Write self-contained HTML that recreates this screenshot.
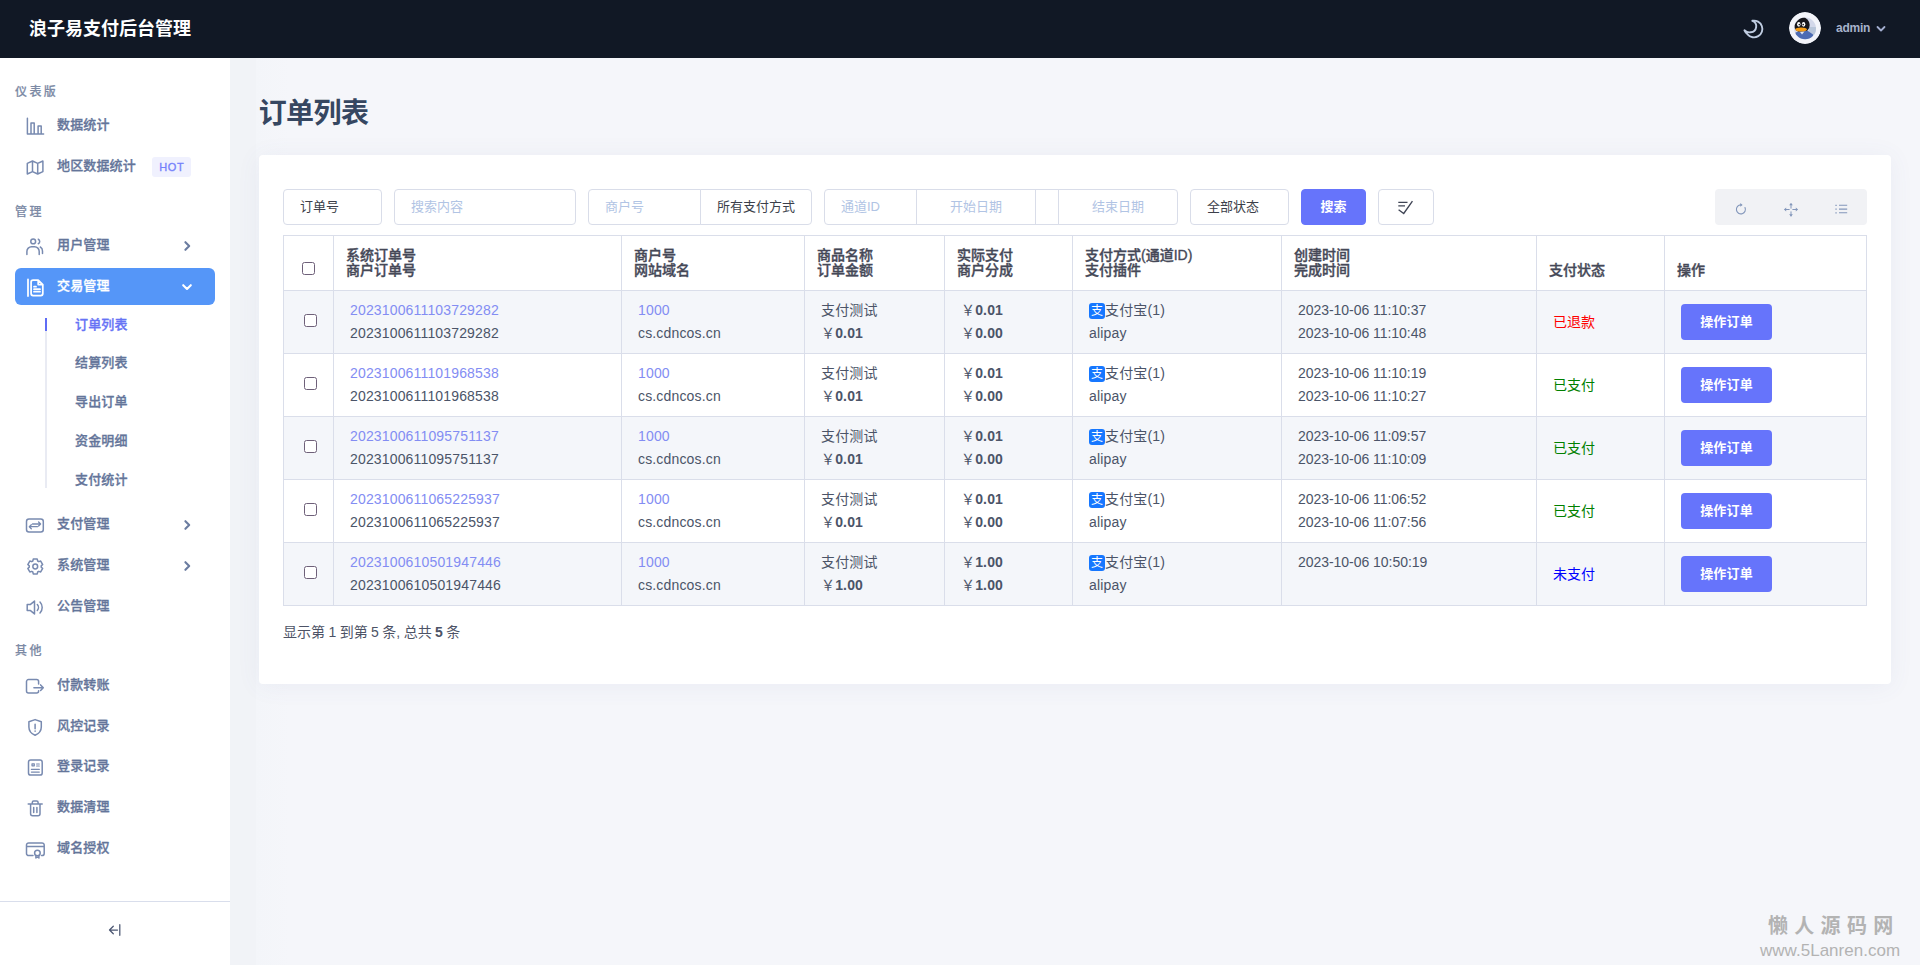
<!DOCTYPE html>
<html lang="zh-CN">
<head>
<meta charset="utf-8">
<title>订单列表</title>
<style>
*{box-sizing:border-box;margin:0;padding:0}
html,body{width:1920px;height:965px;overflow:hidden}
body{font-family:"Liberation Sans","Noto Sans CJK SC",sans-serif;background:#f5f6fa;color:#4b5468;font-size:14px;position:relative}
.abs{position:absolute}
/* header */
#hdr{position:absolute;left:0;top:0;width:1920px;height:58px;background:#111825;z-index:5}
#brand{position:absolute;left:29px;top:16px;font-size:18px;line-height:26px;font-weight:700;color:#fff;letter-spacing:0}
#uname{position:absolute;left:1836px;top:19px;font-size:12px;line-height:18px;font-weight:700;color:#a7b2cb;letter-spacing:-.25px}
#avatar{position:absolute;left:1789px;top:12px;width:32px;height:32px;border-radius:50%;overflow:hidden}
/* sidebar */
#side{position:absolute;left:0;top:58px;width:230px;height:907px;background:#fff;z-index:4}
.sec{position:absolute;left:15px;font-size:12px;line-height:16px;font-weight:500;-webkit-text-stroke:.2px;color:#7c8aa5;letter-spacing:2.4px;margin-top:1.5px}
.it{position:absolute;left:15px;width:200px;height:37px;border-radius:6px;color:#64759a;font-size:13px;font-weight:500;line-height:36px;letter-spacing:.15px;-webkit-text-stroke:.3px}
.it .tx{position:absolute;left:42px;top:0;white-space:nowrap}
.it svg.ic{position:absolute;left:10px;top:9px;width:20px;height:20px;fill:none;stroke:#788ab0;stroke-width:1.500;stroke-linecap:round;stroke-linejoin:round}
.it svg.ar{position:absolute;left:166px;top:13px;width:12px;height:12px;fill:none;stroke:#6b7ca0;stroke-width:2.1;stroke-linecap:round;stroke-linejoin:round}
.it.act{background:#5596f8;color:#fff}
.it.act svg.ic{stroke:#fff;stroke-width:1.750}
.it.act svg.ar{stroke:#fff}
.sub{position:absolute;left:75px;font-size:13px;line-height:20px;font-weight:500;color:#64759a;white-space:nowrap;letter-spacing:.15px;margin-top:.5px;-webkit-text-stroke:.3px}
.sub.on{color:#6673f5}
.hot{position:absolute;left:137px;top:9px;width:39px;height:20px;border-radius:3px;background:#f0f1fe;color:#7480fb;font-size:11px;line-height:20px;text-align:center;font-weight:400;letter-spacing:.6px;padding-left:.5px}
/* main */
#ttl{position:absolute;left:258.700px;top:94.600px;font-size:28px;line-height:38px;font-weight:700;color:#364761;letter-spacing:-.6px}
#card{position:absolute;left:259px;top:155px;width:1632px;height:529px;background:#fff;border-radius:4px;box-shadow:0 2px 24px rgba(90,100,150,.07)}
.fc{position:absolute;top:189px;height:36px;border:1px solid #d9dde9;border-radius:4px;background:#fff;font-size:13px;line-height:33px;color:#3c3f4a;padding-left:16px;white-space:nowrap}
.fc.ph{color:#b1c4e4}
.fc.ctr{padding-left:0;text-align:center}
/* table */
#tb{position:absolute;left:283px;top:235px;width:1583px;border-collapse:collapse;table-layout:fixed}
#tb th,#tb td{border:1px solid #dadeea}
#tb th{height:55px;vertical-align:bottom;text-align:left;padding:0 0 12px 12px;font-size:14px;line-height:15px;font-weight:500;-webkit-text-stroke:.35px;color:#454857;background:#fff}
#tb td{height:63px;vertical-align:top;padding:8px 0 0 16px;font-size:14px;line-height:23px;color:#4b5468;white-space:nowrap;letter-spacing:.16px}
#tb tr.o td{background:#f4f6fa}
#tb a{color:#838df3;text-decoration:none}
#tb td.cb{padding:0 0 5px 4px;text-align:center;vertical-align:middle}#tb th.cb{padding:9px 0 0 0;text-align:center;vertical-align:middle}
.ck{display:inline-block;width:13px;height:13px;border:1.5px solid #6e6079;border-radius:2.5px;background:#fff;vertical-align:middle}
#tb td.st{vertical-align:middle;padding-top:0;font-size:14px;letter-spacing:0;font-weight:400}#tb td.dt{letter-spacing:-.04px}
#tb td.op{vertical-align:middle;padding-top:0}
.btn{display:inline-block;width:91px;height:36px;border-radius:4px;background:#6674fb;color:#fff;font-size:13px;font-weight:700;line-height:35px;text-align:center;vertical-align:middle}
b{font-weight:700}
.ali{display:inline-block;width:16px;height:16px;border-radius:3px;background:#1677ff;vertical-align:-3px;position:relative;top:1px;overflow:hidden;color:#fff;font-size:12px;line-height:16px;text-align:center;font-weight:400}
</style>
</head>
<body>
<!-- HEADER -->
<div id="hdr">
  <div id="brand">浪子易支付后台管理</div>
  <svg class="abs" style="left:1740px;top:16px" width="28" height="28" viewBox="0 0 28 28"><path d="M12.300 4.800A8.350 8.350 0 1 1 7.570 18.300Q5.500 16.600 4.450 14.300Q7.500 17 10.750 16.240A5.900 5.900 0 0 0 12.300 4.800Z" fill="none" stroke="#c0cde2" stroke-width="1.900" stroke-linejoin="round"/></svg>
  <div id="avatar">
    <svg width="32" height="32" viewBox="0 0 32 32"><defs><clipPath id="avc"><circle cx="16.100" cy="16.400" r="10.900"/></clipPath></defs><circle cx="16" cy="16" r="16" fill="#f3f4fa"/><g clip-path="url(#avc)"><rect x="4" y="4" width="25" height="25" fill="#d3d8ea"/><rect x="20" y="15" width="9" height="9" fill="#b9c6da"/><ellipse cx="12.900" cy="13" rx="7.800" ry="7.900" fill="#17171d"/><ellipse cx="9.800" cy="12.300" rx="1.700" ry="2.400" fill="#fff"/><ellipse cx="14.600" cy="12.300" rx="1.700" ry="2.400" fill="#fff"/><circle cx="10.300" cy="12.600" r=".8" fill="#17171d"/><circle cx="14.200" cy="12.600" r=".8" fill="#17171d"/><path d="M6.500 20.500q6-2.500 12.500-1.500l5 3.500v6h-18z" fill="#4d6bb3"/><path d="M11 20l2 2.500 2.500-3z" fill="#dfe6f5"/><ellipse cx="12.100" cy="17.500" rx="5.900" ry="2.100" fill="#f59b14"/></g></svg>
  </div>
  <div id="uname">admin</div>
  <svg class="abs" style="left:1876px;top:25px" width="10" height="8" viewBox="0 0 10 8"><path d="M1.5 2l3.5 3.5L8.500 2" fill="none" stroke="#a3aed0" stroke-width="1.8" stroke-linecap="round" stroke-linejoin="round"/></svg>
</div>

<!-- SIDEBAR -->
<div id="side">
  <div class="sec" style="top:24px">仪表版</div>
  <div class="it" style="top:49px"><svg class="ic" viewBox="0 0 20 20"><path d="M2.400 2.300V18H18.600M6 18V7.100H9.200V18M13.100 18V10H16.200V18"/></svg><span class="tx">数据统计</span></div>
  <div class="it" style="top:90px"><svg class="ic" viewBox="0 0 20 20"><path d="M2.300 6.400L7.500 4L12.700 6.400L17.900 4V14.600L12.700 17L7.500 14.600L2.300 17ZM7.500 4V14.600M12.700 6.400V17"/></svg><span class="tx">地区数据统计</span><span class="hot">HOT</span></div>
  <div class="sec" style="top:144px">管理</div>
  <div class="it" style="top:169px"><svg class="ic" viewBox="0 0 20 20"><circle cx="8.200" cy="5.400" r="2.400"/><path d="M1.900 18.400v-3a4.600 4.600 0 0 1 4.600-4.600h3.100a4.600 4.600 0 0 1 4.600 4.600v3M13.300 3.200a2.500 2.500 0 0 1 0 4.500M15.300 11a4.400 4.400 0 0 1 2.200 3.900v2.700"/></svg><span class="tx">用户管理</span><svg class="ar" viewBox="0 0 12 12"><path d="M4.400 2.200l3.800 3.800-3.800 3.800"/></svg></div>
  <div class="it act" style="top:210px"><svg class="ic" viewBox="0 0 20 20"><path d="M3 2.400V19M8.100 3.100H13.200L17.800 7.600V16.500a2 2 0 0 1-2 2H8.100a2 2 0 0 1-2-2V5.100a2 2 0 0 1 2-2zM13.200 3.100V7.600H17.800M9 9.700h2M9 12.200h6M9 14.700h6"/></svg><span class="tx">交易管理</span><svg class="ar" viewBox="0 0 12 12"><path d="M2.200 4.200l3.800 3.800 3.800-3.800"/></svg></div>
  <div class="abs" style="left:45px;top:260px;width:2px;height:170px;background:#e9ebf3"></div>
  <div class="abs" style="left:45px;top:260px;width:2px;height:13px;background:#5f6cf5"></div>
  <div class="sub on" style="top:256px">订单列表</div>
  <div class="sub" style="top:294px">结算列表</div>
  <div class="sub" style="top:333px">导出订单</div>
  <div class="sub" style="top:372px">资金明细</div>
  <div class="sub" style="top:411px">支付统计</div>
  <div class="it" style="top:448px"><svg class="ic" viewBox="0 0 20 20"><rect x="1.500" y="3.900" width="16.800" height="13.100" rx="2.500"/><path d="M7.500 9h8.100M13.600 7l2 2-2 2M4.300 11.700h8.100M6.300 13.700l-2-2 2-2" stroke-width="1.300"/></svg><span class="tx">支付管理</span><svg class="ar" viewBox="0 0 12 12"><path d="M4.400 2.200l3.800 3.800-3.800 3.800"/></svg></div>
  <div class="it" style="top:489px"><svg class="ic" viewBox="0 0 20 20"><circle cx="10.250" cy="10.500" r="2.400"/><path d="M8.26 3.06L12.24 3.06L12.69 5.02L13.78 5.65L15.69 5.06L17.69 8.51L16.22 9.87L16.22 11.13L17.69 12.49L15.69 15.94L13.78 15.35L12.69 15.98L12.24 17.94L8.26 17.94L7.81 15.98L6.72 15.35L4.81 15.94L2.81 12.49L4.28 11.13L4.28 9.87L2.81 8.51L4.81 5.06L6.72 5.65L7.81 5.02Z"/></svg><span class="tx">系统管理</span><svg class="ar" viewBox="0 0 12 12"><path d="M4.400 2.200l3.800 3.800-3.800 3.800"/></svg></div>
  <div class="it" style="top:530px"><svg class="ic" viewBox="0 0 20 20"><path d="M2.200 7.400h3.300l4-3.300v12.800l-4-3.300h-3.300zM12.300 7.600a4.200 4.200 0 0 1 0 5.800M15 5a8 8 0 0 1 0 11"/></svg><span class="tx">公告管理</span></div>
  <div class="sec" style="top:583px">其他</div>
  <div class="it" style="top:609px"><svg class="ic" viewBox="0 0 20 20"><path d="M13.600 8V5.600a2 2 0 0 0-2-2H3.500a2 2 0 0 0-2 2V15a2 2 0 0 0 2 2h8.100a2 2 0 0 0 2-2v-.3M8.900 11.700h9.400M15.600 8.900l2.700 2.800-2.700 2.800"/></svg><span class="tx">付款转账</span></div>
  <div class="it" style="top:650px"><svg class="ic" viewBox="0 0 20 20"><path d="M10.100 2.600l6.200 2.200v5.200c0 4-2.600 6.800-6.200 8.300-3.600-1.500-6.200-4.300-6.200-8.300v-5.200zM10.100 7.300v4.500M10.100 14v.2"/></svg><span class="tx">风控记录</span></div>
  <div class="it" style="top:690px"><svg class="ic" viewBox="0 0 20 20"><rect x="3.500" y="3" width="13.700" height="15.100" rx="2.200"/><path d="M7 6.800h2.300v2h-2.300zM11.600 7h2.700M11.600 9h2.700M6.400 12.400h7.900M6.400 15.100h7.900" stroke-width="1.200"/></svg><span class="tx">登录记录</span></div>
  <div class="it" style="top:731px"><svg class="ic" viewBox="0 0 20 20"><path d="M3.200 6.100h14M7.300 6.100v-1.600a1.400 1.400 0 0 1 1.400-1.400h3a1.400 1.400 0 0 1 1.400 1.400v1.600M5.600 6.100v9.700a2 2 0 0 0 2 2h5.400a2 2 0 0 0 2-2v-9.700M8.700 9.500v5M11.900 9.500v5"/></svg><span class="tx">数据清理</span></div>
  <div class="it" style="top:772px"><svg class="ic" viewBox="0 0 20 20"><path d="M8 16.600h-4.300a2.200 2.200 0 0 1-2.200-2.200v-8.300a2.200 2.200 0 0 1 2.200-2.200h13.300a2.200 2.200 0 0 1 2.200 2.200v8.300a2.200 2.200 0 0 1-2.200 2.200h-.5M1.500 7.400h17.700"/><circle cx="12.400" cy="14" r="2.800"/><path d="M10.900 16.400v2.600l1.500-1 1.500 1v-2.600"/></svg><span class="tx">域名授权</span></div>
  <div class="abs" style="left:0;top:843px;width:230px;height:1px;background:#d9deec"></div>
  <svg class="abs" style="left:108px;top:864.500px" width="16" height="14" viewBox="0 0 16 14"><path d="M1.500 7h8M5.300 3.200l-3.800 3.800 3.800 3.800M11.800 1.700v10.600" fill="none" stroke="#4b5672" stroke-width="1.250" stroke-linecap="round" stroke-linejoin="round"/></svg>
</div>

<!-- MAIN -->
<div class="abs" style="left:230px;top:58px;width:26px;height:907px;background:#f1f3f7"></div>
<div class="abs" style="left:256px;top:58px;width:34px;height:907px;background:linear-gradient(90deg,#f3f5f9,#f5f6fa)"></div>
<div id="ttl">订单列表</div>
<div id="card"></div>

<!-- filters -->
<div class="fc" style="left:283px;width:99px">订单号</div>
<div class="fc ph" style="left:394px;width:182px">搜索内容</div>
<div class="fc ph" style="left:588px;width:113px;border-radius:4px 0 0 4px">商户号</div>
<div class="fc" style="left:700px;width:112px;border-radius:0 4px 4px 0">所有支付方式</div>
<div class="fc ph" style="left:824px;width:93px;border-radius:4px 0 0 4px">通道ID</div>
<div class="fc ph ctr" style="left:916px;width:120px;border-radius:0">开始日期</div>
<div class="fc" style="left:1035px;width:24px;border-radius:0;padding:0"></div>
<div class="fc ph ctr" style="left:1058px;width:120px;border-radius:0 4px 4px 0">结束日期</div>
<div class="fc" style="left:1190px;width:99px">全部状态</div>
<div class="fc ctr" style="left:1301px;width:65px;background:#6674fb;border-color:#6674fb;color:#fff;font-weight:700">搜索</div>
<div class="fc" style="left:1378px;width:56px;padding:0"><svg class="abs" style="left:-1px;top:-1px" width="56" height="36" viewBox="0 0 56 36"><path d="M20.300 13.300h9.200M20.300 16.900h6.700M20.600 20.700l5.150 3.800 8.700-12.400" fill="none" stroke="#3f4454" stroke-width="1.350" stroke-linecap="butt" stroke-linejoin="miter"/></svg></div>
<div class="abs" style="left:1715px;top:189px;width:152px;height:36px;border-radius:4px;background:#f1f2f5">
  <svg class="abs" style="left:19px;top:13px" width="14" height="14" viewBox="0 0 14 14"><path d="M6.900 2.900a4.500 4.500 0 1 0 4.100 2.600" fill="none" stroke="#8296ba" stroke-width="1.100" stroke-linecap="round"/><path d="M6.300 1l2.300 1.900-2.300 1.900z" fill="#8296ba"/></svg>
  <svg class="abs" style="left:68px;top:13px" width="16" height="16" viewBox="0 0 16 16"><path d="M8 2v4.200M8 9.800v4.200M2 7.500h4.200M9.800 7.500h4.200" fill="none" stroke="#8296ba" stroke-width="1" stroke-linecap="round"/><path d="M8 1l1.900 2.200h-3.800zM8 14.500l1.900-2.200h-3.800zM1 7.500l2.200-1.900v3.800zM15 7.500l-2.200-1.900v3.800z" fill="#8296ba"/></svg>
  <svg class="abs" style="left:120px;top:15px" width="13" height="10" viewBox="0 0 13 10"><path d="M4 1.300h8.200M4 5.100h8.200M4 8.800h8.200" fill="none" stroke="#8296ba" stroke-width="1.100"/><path d="M.4.700h1.300v1.200h-1.300zM.4 4.500h1.300v1.200h-1.300zM.4 8.200h1.300v1.200h-1.300z" fill="#8296ba"/></svg>
</div>

<!-- table -->
<table id="tb">
<colgroup><col style="width:50px"><col style="width:288px"><col style="width:183px"><col style="width:140px"><col style="width:128px"><col style="width:209px"><col style="width:255px"><col style="width:128px"><col style="width:202px"></colgroup>
<tr>
  <th class="cb"><span class="ck"></span></th>
  <th>系统订单号<br>商户订单号</th>
  <th>商户号<br>网站域名</th>
  <th>商品名称<br>订单金额</th>
  <th>实际支付<br>商户分成</th>
  <th>支付方式(通道ID)<br>支付插件</th>
  <th>创建时间<br>完成时间</th>
  <th>支付状态</th>
  <th>操作</th>
</tr>
<tr class="o">
  <td class="cb"><span class="ck"></span></td>
  <td><a>2023100611103729282</a><br>2023100611103729282</td>
  <td><a>1000</a><br>cs.cdncos.cn</td>
  <td>支付测试<br>￥<b>0.01</b></td>
  <td>￥<b>0.01</b><br>￥<b>0.00</b></td>
  <td><span class="ali">支</span>支付宝(1)<br>alipay</td>
  <td class="dt">2023-10-06 11:10:37<br>2023-10-06 11:10:48</td>
  <td class="st" style="color:#f00">已退款</td>
  <td class="op"><span class="btn">操作订单</span></td>
</tr>
<tr>
  <td class="cb"><span class="ck"></span></td>
  <td><a>2023100611101968538</a><br>2023100611101968538</td>
  <td><a>1000</a><br>cs.cdncos.cn</td>
  <td>支付测试<br>￥<b>0.01</b></td>
  <td>￥<b>0.01</b><br>￥<b>0.00</b></td>
  <td><span class="ali">支</span>支付宝(1)<br>alipay</td>
  <td class="dt">2023-10-06 11:10:19<br>2023-10-06 11:10:27</td>
  <td class="st" style="color:#008000">已支付</td>
  <td class="op"><span class="btn">操作订单</span></td>
</tr>
<tr class="o">
  <td class="cb"><span class="ck"></span></td>
  <td><a>2023100611095751137</a><br>2023100611095751137</td>
  <td><a>1000</a><br>cs.cdncos.cn</td>
  <td>支付测试<br>￥<b>0.01</b></td>
  <td>￥<b>0.01</b><br>￥<b>0.00</b></td>
  <td><span class="ali">支</span>支付宝(1)<br>alipay</td>
  <td class="dt">2023-10-06 11:09:57<br>2023-10-06 11:10:09</td>
  <td class="st" style="color:#008000">已支付</td>
  <td class="op"><span class="btn">操作订单</span></td>
</tr>
<tr>
  <td class="cb"><span class="ck"></span></td>
  <td><a>2023100611065225937</a><br>2023100611065225937</td>
  <td><a>1000</a><br>cs.cdncos.cn</td>
  <td>支付测试<br>￥<b>0.01</b></td>
  <td>￥<b>0.01</b><br>￥<b>0.00</b></td>
  <td><span class="ali">支</span>支付宝(1)<br>alipay</td>
  <td class="dt">2023-10-06 11:06:52<br>2023-10-06 11:07:56</td>
  <td class="st" style="color:#008000">已支付</td>
  <td class="op"><span class="btn">操作订单</span></td>
</tr>
<tr class="o">
  <td class="cb"><span class="ck"></span></td>
  <td><a>2023100610501947446</a><br>2023100610501947446</td>
  <td><a>1000</a><br>cs.cdncos.cn</td>
  <td>支付测试<br>￥<b>1.00</b></td>
  <td>￥<b>1.00</b><br>￥<b>1.00</b></td>
  <td><span class="ali">支</span>支付宝(1)<br>alipay</td>
  <td class="dt">2023-10-06 10:50:19</td>
  <td class="st" style="color:#00f">未支付</td>
  <td class="op"><span class="btn">操作订单</span></td>
</tr>
</table>

<div class="abs" style="left:283px;top:622px;font-size:14px;line-height:20px;color:#4d5366;white-space:nowrap;word-spacing:-.45px">显示第 1 到第 5 条, 总共 <b>5</b> 条</div>

<!-- watermark -->
<div class="abs" style="left:1768px;top:912px;font-size:20px;line-height:28px;font-weight:700;color:#b3b3b3;letter-spacing:6.300px;white-space:nowrap">懒人源码网</div>
<div class="abs" style="left:1760px;top:939px;font-size:17px;line-height:24px;color:#b3b3b3;white-space:nowrap;letter-spacing:.02px">www.5Lanren.com</div>
</body>
</html>
